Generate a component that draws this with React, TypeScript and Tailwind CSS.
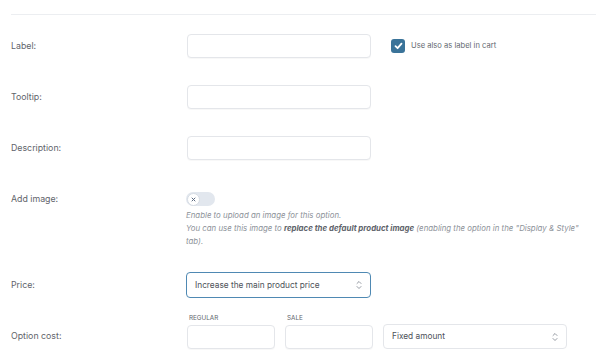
import React from 'react'

const labelCls = 'w-[176px] shrink-0 text-[8.8px] text-[#5f646b]'
const inputCls = 'block h-[24px] rounded-[4px] border border-[#e4e6ea] bg-white shadow-[0_1px_1px_rgba(0,0,0,0.03)]'

const UpDown: React.FC = () => (
  <svg width="6" height="10" viewBox="0 0 6 10" fill="none" stroke="#8a9099" strokeWidth="0.9" strokeLinecap="round" strokeLinejoin="round">
    <path d="M1 3.5 L3 1.5 L5 3.5" />
    <path d="M1 6.5 L3 8.5 L5 6.5" />
  </svg>
)

const Row: React.FC<{ label: string; className?: string; children: React.ReactNode }> = ({ label, className, children }) => (
  <div className={'flex items-center ' + (className ?? '')}>
    <div className={labelCls}>{label}</div>
    {children}
  </div>
)

const App: React.FC = () => {
  return (
    <div className="w-[607px] h-[355px] overflow-hidden bg-white px-[11px] pt-[14px] font-['Inter','Liberation_Sans',sans-serif]">
      <div className="h-px w-[585px] bg-[#eceef1]" />

      <Row label="Label:" className="mt-[19px]">
        <div className={inputCls + ' w-[184px]'} />
        <div className="ml-[20px] flex items-center">
          <span className="flex size-[14px] items-center justify-center rounded-[3px] bg-[#3a7399]">
            <svg width="9" height="8" viewBox="0 0 9 8" fill="none" stroke="white" strokeWidth="1.8" strokeLinecap="round" strokeLinejoin="round">
              <path d="M1.5 4.2 L3.6 6.2 L7.5 1.6" />
            </svg>
          </span>
          <span className="ml-[6px] text-[7.6px] text-[#656a71]">Use also as label in cart</span>
        </div>
      </Row>

      <Row label="Tooltip:" className="mt-[27px]">
        <div className={inputCls + ' w-[184px]'} />
      </Row>

      <Row label="Description:" className="mt-[27px]">
        <div className={inputCls + ' w-[184px]'} />
      </Row>

      <div className="mt-[32px] flex items-start">
        <div className={labelCls}>Add image:</div>
        <div className="-ml-px">
          <div className="flex h-[14px] w-[29px] items-center rounded-full bg-[#e2e7ee] pl-px">
            <span className="flex size-[13px] items-center justify-center rounded-full border border-[#d6dce4] bg-white">
              <svg width="5" height="5" viewBox="0 0 5 5" stroke="#5d6b80" strokeWidth="1" strokeLinecap="round">
                <path d="M1 1 L4 4 M4 1 L1 4" />
              </svg>
            </span>
          </div>
          <div className="mt-[3px] w-[410px] text-[7.85px] italic leading-[13px] text-[#8d9299]">
            <div>Enable to upload an image for this option.</div>
            <div>
              You can use this image to <b className="font-bold text-[#5d6269]">replace the default product image</b> (enabling the option in the "Display &amp; Style"
            </div>
            <div>tab).</div>
          </div>
        </div>
      </div>

      <Row label="Price:" className="mt-[24px]">
        <div className="-ml-px flex h-[26px] w-[185px] items-center justify-between rounded-[4px] border-[1.5px] border-[#4f89b3] bg-white pl-[8px] pr-[8px] text-[8.3px] text-[#4d5259]">
          <span>Increase the main product price</span>
          <UpDown />
        </div>
      </Row>

      <div className="mt-[16px] flex items-end">
        <div className={labelCls + ' pb-[7px]'}>Option cost:</div>
        <div>
          <div className="pl-[2px] text-[6.3px] leading-[9px] text-[#60656c]">REGULAR</div>
          <div className={inputCls + ' mt-[2px] w-[88px]'} />
        </div>
        <div className="ml-[10px]">
          <div className="pl-[2px] text-[6.3px] leading-[9px] text-[#60656c]">SALE</div>
          <div className={inputCls + ' mt-[2px] w-[88px]'} />
        </div>
        <div className="ml-[10px] flex h-[25px] w-[184px] items-center justify-between rounded-[4px] border border-[#e4e6ea] bg-white pl-[8px] pr-[8px] text-[8.3px] text-[#4d5259]">
          <span>Fixed amount</span>
          <UpDown />
        </div>
      </div>
    </div>
  )
}

export default App
